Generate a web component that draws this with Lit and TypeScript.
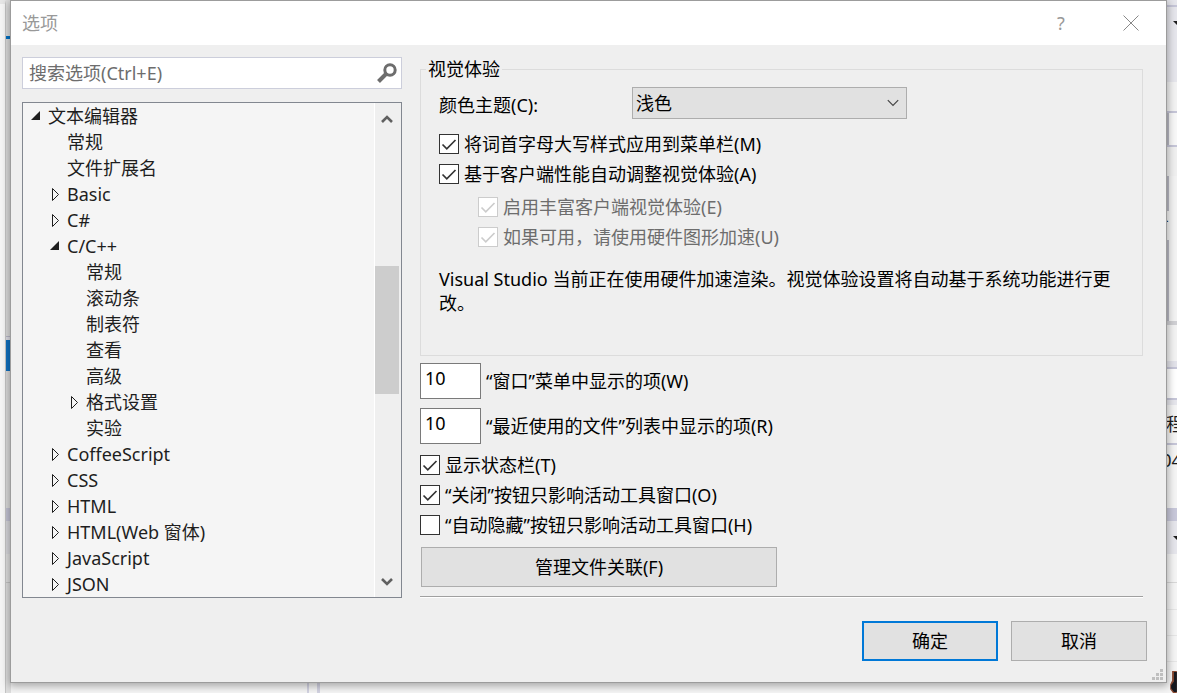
import { LitElement, html, svg, css, nothing } from "lit";
import { customElement, property, state } from "lit/decorators.js";
import { classMap } from "lit/directives/class-map.js";
import { styleMap } from "lit/directives/style-map.js";

interface Strip {
  h: number;
  color: string;
  bar?: boolean;
  text?: string;
  align?: "start" | "center" | "end";
  arrow?: boolean;
}

interface Node {
  label: string;
  level: number;
  mark: "open" | "closed" | "leaf";
}

const LEFT_STRIPS: Strip[] = [
  { h: 36, color: "#dedede" },
  { h: 3, color: "#0071c5" },
  { h: 297, color: "#dcdcdc" },
  { h: 1, color: "#b8b8c8" },
  { h: 3, color: "#dcdce4" },
  { h: 31, color: "#0e70c0" },
  { h: 137, color: "#dcdcdc" },
  { h: 13, color: "#c3c3d4" },
  { h: 33, color: "#d8d8dc" },
  { h: 28, color: "#e0e0e0" },
  { h: 1, color: "#c4c4c4" },
];

const RIGHT_STRIPS: Strip[] = [
  { h: 5, color: "#e6e6ec" },
  { h: 2, color: "#c6c6d8" },
  { h: 32, color: "#e6e6ec", arrow: true },
  { h: 43, color: "#e6e6ec" },
  { h: 29, color: "#f3f3f3" },
  { h: 2, color: "#c6c6d8" },
  { h: 32, color: "#f8f8f8", bar: true },
  { h: 2, color: "#c6c6d8" },
  { h: 29, color: "#f0f0f0" },
  { h: 35, color: "#f3f3f3", bar: true },
  { h: 29, color: "#f3f3f3", text: "方", align: "end" },
  { h: 81, color: "#f3f3f3", bar: true },
  { h: 4, color: "#d0d0d4" },
  { h: 36, color: "#f3f3f3" },
  { h: 6, color: "#e3e3ea" },
  { h: 2, color: "#c6c6d8" },
  { h: 29, color: "#ffffff" },
  { h: 2, color: "#c6c6d8" },
  { h: 5, color: "#e6e6ec" },
  { h: 38, color: "#f5f5f5", text: "程", align: "start" },
  { h: 2, color: "#c6c6d8" },
  { h: 29, color: "#f5f5f5", text: "04", align: "center" },
  { h: 34, color: "#f5f5f5" },
  { h: 13, color: "#c8c8da" },
  { h: 33, color: "#e6e6ec", arrow: true },
  { h: 28, color: "#f5f5f5" },
  { h: 1, color: "#d8d8d8" },
  { h: 26, color: "#f5f5f5" },
  { h: 1, color: "#e6e6e6" },
  { h: 25, color: "#f5f5f5" },
  { h: 1, color: "#e6e6e6" },
  { h: 25, color: "#f5f5f5" },
  { h: 1, color: "#e6e6e6" },
];

const NODES: Node[] = [
  { label: "文本编辑器", level: 0, mark: "open" },
  { label: "常规", level: 1, mark: "leaf" },
  { label: "文件扩展名", level: 1, mark: "leaf" },
  { label: "Basic", level: 1, mark: "closed" },
  { label: "C#", level: 1, mark: "closed" },
  { label: "C/C++", level: 1, mark: "open" },
  { label: "常规", level: 2, mark: "leaf" },
  { label: "滚动条", level: 2, mark: "leaf" },
  { label: "制表符", level: 2, mark: "leaf" },
  { label: "查看", level: 2, mark: "leaf" },
  { label: "高级", level: 2, mark: "leaf" },
  { label: "格式设置", level: 2, mark: "closed" },
  { label: "实验", level: 2, mark: "leaf" },
  { label: "CoffeeScript", level: 1, mark: "closed" },
  { label: "CSS", level: 1, mark: "closed" },
  { label: "HTML", level: 1, mark: "closed" },
  { label: "HTML(Web 窗体)", level: 1, mark: "closed" },
  { label: "JavaScript", level: 1, mark: "closed" },
  { label: "JSON", level: 1, mark: "closed" },
];

const FONT = css`"Noto Sans", "Noto Sans CJK SC", sans-serif`;

/** The development environment that shows round the edges of the dialog. */
@customElement("ide-backdrop")
export class IdeBackdrop extends LitElement {
  static styles = css`
    :host {
      display: grid;
      grid-template-columns: 6px 5px 1fr 11px;
      overflow: hidden;
      background: #f5f5f5;
      font: 18px/24px ${FONT};
      color: #1e1e1e;
    }
    .panel {
      border-right: 1px solid #c4c4c4;
      border-top: 4px solid #e6e6e6;
      background: #f5f5f5;
    }
    .column {
      display: flex;
      flex-direction: column;
      overflow: hidden;
      background: #f5f5f5;
    }
    .column.left {
      background: #dedede;
    }
    .strip {
      display: flex;
      flex: none;
      align-items: center;
      box-sizing: border-box;
      overflow: hidden;
      white-space: nowrap;
    }
    .bar {
      border-left: 3px solid #b9b9c4;
    }
    .center {
      justify-content: center;
    }
    .end {
      justify-content: flex-end;
      padding-right: 8px;
    }
    .arrow {
      flex: none;
      margin-left: 7px;
    }
    .middle {
      display: flex;
      padding-left: 296px;
    }
    .splitter {
      width: 8px;
      border: solid #d3d3e2;
      border-width: 0 3px 0 2px;
    }
    .avatar {
      margin-top: 9px;
      margin-left: 4px;
    }
  `;

  private strip(s: Strip) {
    return html`<div
      class=${classMap({
        strip: true,
        bar: !!s.bar,
        center: s.align === "center",
        end: s.align === "end",
      })}
      style=${styleMap({ height: `${s.h}px`, background: s.color })}
    >${s.text ?? nothing}${s.arrow
      ? html`<svg class="arrow" width="8" height="4" viewBox="0 0 8 4">
          <path d="M0 0h8L4 4z" fill="#1e1e1e" />
        </svg>`
      : nothing}</div>`;
  }

  render() {
    return html`
      <div class="panel"></div>
      <div class="column left">${LEFT_STRIPS.map((s) => this.strip(s))}</div>
      <div class="middle"><div class="splitter"></div></div>
      <div class="column">
        ${RIGHT_STRIPS.map((s) => this.strip(s))}
        <svg class="avatar" width="7" height="23" viewBox="0 0 7 23">
          <path d="M2 0h5v23H3L0 19V14l2-4z" fill="#8a4a32" />
          <path d="M4 1h3v21H4L1 18v-3l3-4z" fill="#16181f" />
        </svg>
      </div>
    `;
  }
}

/** A tick box with its label. */
@customElement("check-row")
export class CheckRow extends LitElement {
  @property() label = "";
  @property({ type: Boolean }) checked = false;
  @property({ type: Boolean }) disabled = false;

  static styles = css`
    :host {
      display: block;
    }
    label {
      display: flex;
      align-items: center;
      gap: 5px;
      height: 30px;
      color: #000;
      font: 18px/24px ${FONT};
      white-space: nowrap;
    }
    input {
      appearance: none;
      flex: none;
      box-sizing: border-box;
      width: 20px;
      height: 20px;
      margin: 0;
      border: 1px solid #333;
      background: #fff center / 18px 18px no-repeat;
    }
    input:checked {
      background-image: url("data:image/svg+xml,%3Csvg xmlns='http://www.w3.org/2000/svg' viewBox='0 0 18 18'%3E%3Cpath d='M2.5 9.5l4.3 4.3L15.5 5' fill='none' stroke='%23333' stroke-width='1.7'/%3E%3C/svg%3E");
    }
    input:disabled {
      border-color: #ccc;
    }
    input:disabled:checked {
      background-image: url("data:image/svg+xml,%3Csvg xmlns='http://www.w3.org/2000/svg' viewBox='0 0 18 18'%3E%3Cpath d='M2.5 9.5l4.3 4.3L15.5 5' fill='none' stroke='%23ccc' stroke-width='1.7'/%3E%3C/svg%3E");
    }
    .off {
      color: #6d6d6d;
    }
  `;

  render() {
    return html`<label class=${this.disabled ? "off" : ""}>
      <input
        type="checkbox"
        .checked=${this.checked}
        ?disabled=${this.disabled}
        @change=${(e: Event) => (this.checked = (e.target as HTMLInputElement).checked)}
      />
      <span>${this.label}</span>
    </label>`;
  }
}

/** The category tree with its scroll bar. */
@customElement("option-tree")
export class OptionTree extends LitElement {
  @state() private selected = -1;

  static styles = css`
    :host {
      display: flex;
      border: 1px solid #828790;
      background: #f5f5f5;
      color: #1e1e1e;
      font: 18px/26px ${FONT};
    }
    ul {
      flex: 1;
      margin: 0;
      padding: 0 0 0 6px;
      list-style: none;
      overflow: hidden;
    }
    li {
      display: flex;
      align-items: center;
      height: 26px;
      white-space: nowrap;
      cursor: default;
    }
    .level-1 {
      padding-left: 19px;
    }
    .level-2 {
      padding-left: 38px;
    }
    .mark {
      flex: none;
      width: 19px;
      height: 14px;
    }
    .selected {
      text-decoration: underline;
    }
    .scroll {
      display: grid;
      grid-template-rows: 32px 131fr 128px 172fr 32px;
      justify-items: start;
      width: 26px;
      border-left: 1px solid #fff;
      background: #efefef;
    }
    .scroll button {
      display: flex;
      align-items: center;
      justify-content: center;
      width: 24px;
      padding: 0;
      border: 0;
      background: none;
    }
    .thumb {
      grid-row: 3;
      width: 24px;
      background: #cdcdcd;
    }
    .down {
      grid-row: 5;
    }
  `;

  private mark(kind: Node["mark"]) {
    if (kind === "open") return svg`<path d="M11 2v9H2z" fill="#1e1e1e" />`;
    if (kind === "closed")
      return svg`<path d="M4.500 1.500v12l6-6z" fill="none" stroke="#1e1e1e" />`;
    return nothing;
  }

  render() {
    return html`
      <ul role="tree" aria-label="选项">
        ${NODES.map(
          (n, i) => html`<li
            role="treeitem"
            aria-level=${n.level + 1}
            class=${classMap({ [`level-${n.level}`]: true, selected: this.selected === i })}
            @click=${() => (this.selected = i)}
          >
            <svg class="mark" viewBox="0 0 19 14">${this.mark(n.mark)}</svg>
            <span>${n.label}</span>
          </li>`
        )}
      </ul>
      <div class="scroll">
        <button aria-label="向上滚动">
          <svg width="12" height="10" viewBox="0 0 12 10">
            <path d="M1 8l5-5 5 5" fill="none" stroke="#606060" stroke-width="2.6" />
          </svg>
        </button>
        <div class="thumb"></div>
        <button class="down" aria-label="向下滚动">
          <svg width="12" height="10" viewBox="0 0 12 10">
            <path d="M1 3l5 5 5-5" fill="none" stroke="#606060" stroke-width="2.6" />
          </svg>
        </button>
      </div>
    `;
  }
}

@customElement("app-root")
export class AppRoot extends LitElement {
  static styles = css`
    :host {
      display: block;
      position: relative;
      box-sizing: border-box;
      min-height: 100vh;
      padding: 0 10px;
      overflow: hidden;
      color: #000;
      font: 18px/24px ${FONT};
    }
    ide-backdrop {
      position: absolute;
      inset: 0;
    }
    .dialog {
      position: relative;
      border: 1px solid #9c9c9c;
      background: #efefef;
      box-shadow: 0 2px 8px 1px rgba(0, 0, 0, 0.32);
    }
    .title {
      display: flex;
      align-items: center;
      height: 44px;
      padding: 0 25px 0 11px;
      background: #fff;
      color: #999;
    }
    .title h1 {
      flex: 1;
      margin: 0;
      font: inherit;
    }
    .title button {
      display: flex;
      align-items: center;
      justify-content: center;
      width: 20px;
      height: 24px;
      padding: 0;
      border: 0;
      background: none;
      color: inherit;
      font: inherit;
    }
    .title .close {
      margin-left: 50px;
    }
    .body {
      display: grid;
      grid-template-columns: 380px 1fr;
      column-gap: 18px;
      padding: 12px 23px 0 11px;
    }
    .search {
      display: flex;
      align-items: center;
      box-sizing: border-box;
      height: 32px;
      margin-bottom: 13px;
      padding: 0 4px 0 6px;
      border: 1px solid #cccedb;
      background: #fff;
    }
    .search input {
      flex: 1;
      min-width: 0;
      padding: 0;
      border: 0;
      outline: 0;
      background: none;
      font: inherit;
    }
    .search input::placeholder {
      color: #6d6d6d;
      opacity: 1;
    }
    fieldset {
      min-width: 0;
      box-sizing: border-box;
      height: 299px;
      margin: 0;
      padding: 6px 18px 0;
      border: 1px solid #dcdcdc;
    }
    legend {
      margin-left: -13px;
      padding: 0 2px;
    }
    .theme {
      display: grid;
      grid-template-columns: 193px 275px;
      align-items: center;
      margin-bottom: 10px;
    }
    .theme label {
      padding-top: 3px;
    }
    select {
      appearance: none;
      box-sizing: border-box;
      height: 32px;
      padding: 0 30px 0 3px;
      border: 1px solid #adadad;
      border-radius: 0;
      background: #e1e1e1
        url("data:image/svg+xml,%3Csvg xmlns='http://www.w3.org/2000/svg' viewBox='0 0 12 8'%3E%3Cpath d='M.8 1.2L6 6.4l5.2-5.2' fill='none' stroke='%23444' stroke-width='1.2'/%3E%3C/svg%3E")
        right 7px center / 12px 8px no-repeat;
      color: #000;
      font: inherit;
    }
    .nested {
      margin: 3px 0 15px;
      padding-left: 39px;
    }
    p {
      margin: 0;
    }
    .count {
      display: flex;
      align-items: center;
      gap: 5px;
      height: 36px;
      margin-top: 9px;
    }
    fieldset + .count {
      margin-top: 7px;
    }
    .count input {
      box-sizing: border-box;
      width: 61px;
      height: 36px;
      padding: 2px 4px 8px;
      border: 1px solid #7a7a7a;
      border-radius: 0;
      background: #fff;
      color: #000;
      font: inherit;
    }
    .checks {
      margin-top: 6px;
    }
    .push {
      box-sizing: border-box;
      height: 40px;
      padding: 0;
      border: 1px solid #adadad;
      border-radius: 0;
      background: #e1e1e1;
      color: #000;
      font: inherit;
    }
    .wide {
      display: block;
      width: 356px;
      margin: 7px 0 9px 1px;
    }
    .rule {
      height: 1px;
      margin: 0;
      border: solid;
      border-width: 1px 0 0;
      border-color: #a0a0a0;
      background: #fff;
    }
    .footer {
      display: flex;
      justify-content: flex-end;
      gap: 13px;
      padding: 23px 19px 21px;
    }
    .footer .push {
      width: 136px;
    }
    .footer .default {
      border: 2px solid #0078d7;
    }
    .grip {
      position: absolute;
      right: 3px;
      bottom: 2px;
    }
  `;

  render() {
    return html`
      <ide-backdrop aria-hidden="true"></ide-backdrop>
      <div class="dialog" role="dialog" aria-labelledby="title">
        <header class="title">
          <h1 id="title">选项</h1>
          <button aria-label="帮助">?</button>
          <button class="close" aria-label="关闭">
            <svg width="16" height="16" viewBox="0 0 16 16">
              <path d="M.5.5l15 15M15.5.5l-15 15" stroke="#888" fill="none" />
            </svg>
          </button>
        </header>
        <div class="body">
          <div class="side">
            <div class="search">
              <input type="text" aria-label="搜索选项" placeholder="搜索选项(Ctrl+E)" />
              <svg width="20" height="20" viewBox="0 0 20 20">
                <circle cx="13" cy="7" r="5.2" fill="none" stroke="#6d6d6d" stroke-width="3" />
                <path d="M9 11l-7.500 7.500" stroke="#6d6d6d" stroke-width="4" />
              </svg>
            </div>
            <option-tree></option-tree>
          </div>
          <main>
            <fieldset>
              <legend>视觉体验</legend>
              <div class="theme">
                <label for="theme">颜色主题(C):</label>
                <select id="theme">
                  <option>浅色</option>
                </select>
              </div>
              <check-row label="将词首字母大写样式应用到菜单栏(M)" checked></check-row>
              <check-row label="基于客户端性能自动调整视觉体验(A)" checked></check-row>
              <div class="nested">
                <check-row label="启用丰富客户端视觉体验(E)" checked disabled></check-row>
                <check-row label="如果可用，请使用硬件图形加速(U)" checked disabled></check-row>
              </div>
              <p>Visual Studio 当前正在使用硬件加速渲染。视觉体验设置将自动基于系统功能进行更改。</p>
            </fieldset>
            <div class="count">
              <input id="windows" type="text" value="10" />
              <label for="windows">“窗口”菜单中显示的项(W)</label>
            </div>
            <div class="count">
              <input id="recent" type="text" value="10" />
              <label for="recent">“最近使用的文件”列表中显示的项(R)</label>
            </div>
            <div class="checks">
              <check-row label="显示状态栏(T)" checked></check-row>
              <check-row label="“关闭”按钮只影响活动工具窗口(O)" checked></check-row>
              <check-row label="“自动隐藏”按钮只影响活动工具窗口(H)"></check-row>
            </div>
            <button class="push wide">管理文件关联(F)</button>
            <hr class="rule" />
          </main>
        </div>
        <footer class="footer">
          <button class="push default">确定</button>
          <button class="push">取消</button>
        </footer>
        <svg class="grip" width="11" height="11" viewBox="0 0 11 11" fill="#bfbfbf">
          <path d="M8 0h3v3H8zM4 4h3v3H4zM8 4h3v3H8zM0 8h3v3H0zM4 8h3v3H4zM8 8h3v3H8z" />
        </svg>
      </div>
    `;
  }
}
